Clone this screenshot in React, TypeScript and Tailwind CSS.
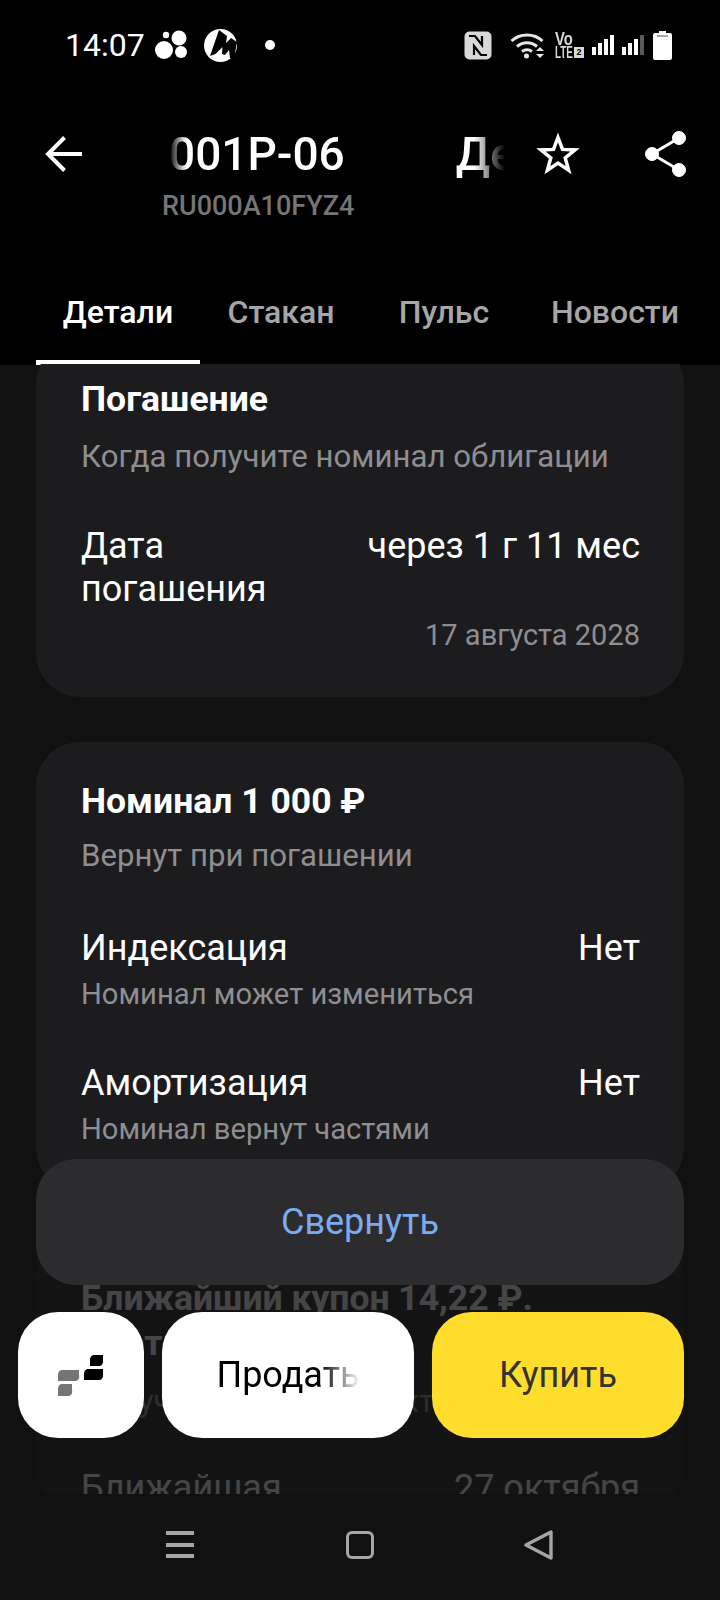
function StatusIcons() {
  return (
    <div className="flex items-center">
      {/* nfc */}
      <svg width="28" height="29" viewBox="0 0 28 29">
        <rect x="0.5" y="0.5" width="27" height="28" rx="5" fill="#d8d8d8" />
        <path d="M5 5h6l7 9v-9M23 24h-6l-7-9v9" fill="none" stroke="#000" strokeWidth="2.2" />
      </svg>
      {/* wifi */}
      <svg width="34" height="28" viewBox="0 0 34 28" className="ml-[18px]" fill="none" stroke="#e6e6e6" strokeWidth="3">
        <path d="M1.5 10C10 2 24 2 32.5 10" />
        <path d="M7 15.5c6-5 14-5 20 0" />
        <path d="M12 20.5c3-2 7-2 10 0" />
        <circle cx="16.5" cy="25" r="2.5" fill="#e6e6e6" stroke="none" />
        <path d="M26 20l4-4 4 4zM26 23h8l-4 4z" fill="#e6e6e6" stroke="none" />
      </svg>
      {/* volte */}
      <div className="ml-[11px] flex h-[28px] w-[29px] flex-col whitespace-nowrap font-['Liberation_Sans'] font-bold leading-none text-[#d8d8d8]">
        <span className="block h-[15px] w-[18px] origin-left scale-x-[0.78] text-[19px] leading-[15px]">Vo</span>
        <div className="flex items-center leading-none">
          <span className="block w-[19px] origin-left scale-x-[0.58] text-[17px] leading-[13px]">LTE</span>
          <span className="flex h-[11px] w-[10px] items-center justify-center bg-[#d8d8d8] text-[9px] text-black">2</span>
        </div>
      </div>
      {/* signal */}
      <svg width="22" height="20" viewBox="0 0 22 20" className="ml-[8px]" fill="#fff">
        <rect x="0" y="12" width="4" height="8" />
        <rect x="6" y="8" width="4" height="12" />
        <rect x="12" y="4" width="4" height="16" />
        <rect x="18" y="0" width="4" height="20" />
      </svg>
      <svg width="22" height="20" viewBox="0 0 22 20" className="ml-[8px]" fill="#fff">
        <rect x="0" y="12" width="4" height="8" />
        <rect x="6" y="8" width="4" height="12" />
        <rect x="12" y="4" width="4" height="16" />
        <rect x="18" y="0" width="4" height="20" fill="#5a5a5a" />
      </svg>
      {/* battery */}
      <svg width="19" height="29" viewBox="0 0 19 29" className="ml-[9px]" fill="#fff">
        <path d="M6 0h7v2h4a2 2 0 0 1 2 2v23a2 2 0 0 1-2 2H2a2 2 0 0 1-2-2V4a2 2 0 0 1 2-2h4z" />
        <rect x="4" y="4.5" width="11" height="1" fill="#555" />
      </svg>
    </div>
  );
}

function Row({ label, value, hint }: { label: string; value: string; hint: string }) {
  return (
    <div>
      <div className="flex justify-between text-[36px] leading-[44px] text-white">
        <span>{label}</span>
        <span>{value}</span>
      </div>
      <div className="mt-[3px] text-[29.2px] leading-[42px] text-[#8e8e93]">{hint}</div>
    </div>
  );
}

export default function App() {
  return (
    <div className="relative flex h-[1600px] w-[720px] flex-col overflow-hidden bg-[#111112] font-['Roboto',sans-serif]">
      <header className="bg-black">
        {/* status bar */}
        <div className="flex h-[90px] items-center justify-between pl-[65px] pr-[48px]">
          <div className="flex items-center text-[32px] text-white">
            <span>14:07</span>
            <svg width="32" height="30" viewBox="0 0 32 30" className="ml-[10px]" fill="#fff">
              <circle cx="24" cy="8" r="7.5" />
              <circle cx="9" cy="20" r="9" />
              <circle cx="26" cy="22" r="6" />
              <circle cx="11" cy="5" r="3.2" />
            </svg>
            <svg width="33" height="33" viewBox="0 0 33 33" className="ml-[17px]">
              <circle cx="16.5" cy="16.5" r="16.5" fill="#fff" />
              <path d="M6 27L15 1l8 6-1 7 5-5 6 4-3 17-4-1-1-8-4 5-3-1 .5-7-7 7z" fill="#000" />
            </svg>
            <span className="ml-[28px] h-[10px] w-[10px] rounded-full bg-white" />
          </div>
          <StatusIcons />
        </div>
        {/* title */}
        <div className="flex h-[132px] items-start pl-[45px] pt-[39px]">
          <svg width="37" height="36" viewBox="0 0 37 36" className="mt-[7px]" fill="none" stroke="#fff" strokeWidth="4">
            <path d="M37 18H3" />
            <path d="M19.5 1.5L3 18l16.5 16.5" />
          </svg>
          <div className="ml-[80px] w-[343px]">
            <div className="flex overflow-hidden whitespace-nowrap pl-[7px] text-[46px] font-medium leading-[50px] text-white [mask-image:linear-gradient(to_right,transparent_2%,black_7%,black_91%,transparent_100%)]">
              <span>001P-06</span>
              <span className="ml-[111px]">Десятый</span>
            </div>
            <div className="mt-[11px] text-[27px] font-medium leading-[32px] text-[#757575]">RU000A10FYZ4</div>
          </div>
          <svg width="44" height="44" viewBox="0 0 44 44" className="mt-[2px] ml-[31px] overflow-visible" fill="none" stroke="#fff" strokeWidth="3.5" strokeMiterlimit="10">
            <path d="M22 6.5l4.5 11.9 12.6.5-9.9 8 3.4 12.2L22 32.1l-10.6 7 3.4-12.2-9.9-8 12.6-.5z" />
          </svg>
          <svg width="42" height="46" viewBox="0 0 42 46" className="mt-[2px] ml-[65px]" fill="#fff" stroke="#fff">
            <circle cx="34" cy="7" r="6.5" />
            <circle cx="7" cy="23" r="6.5" />
            <circle cx="34" cy="39" r="6.5" />
            <path d="M34 7L7 23l27 16" fill="none" strokeWidth="3" />
          </svg>
        </div>
        {/* tabs */}
        <nav className="flex h-[143px] pl-[36px] pt-[68px] text-center text-[32px] font-medium leading-[44px] text-[#a6a6a6]">
          <div className="h-[75px] w-[164px] border-b-[5px] border-white text-white">Детали</div>
          <div className="w-[162px]">Стакан</div>
          <div className="w-[164px]">Пульс</div>
          <div className="w-[178px]">Новости</div>
        </nav>
      </header>

      {/* scrolling content */}
      <main className="-mt-[1px] flex flex-1 flex-col gap-[45px] overflow-hidden px-[36px]">
        <section className="-mt-[24px] h-[357px] shrink-0 rounded-[44px] bg-[#1c1c1e] pl-[45px] pr-[44px] pt-[37px]">
          <h2 className="text-[35.5px] font-bold leading-[44px] text-white">Погашение</h2>
          <p className="mt-[14px] text-[31.2px] leading-[44px] text-[#8e8e93]">Когда получите номинал облигации</p>
          <div className="mt-[46px] flex justify-between text-[36px] leading-[43px] text-white">
            <span className="w-[220px]">Дата погашения</span>
            <span>через 1 г 11 мес</span>
          </div>
          <div className="mt-[4px] text-right text-[29px] leading-[40px] text-[#8e8e93]">17 августа 2028</div>
        </section>

        <section className="h-[450px] shrink-0 rounded-[44px] bg-[#1c1c1e] pl-[45px] pr-[44px] pt-[37px]">
          <h2 className="text-[35.5px] font-bold leading-[44px] text-white">Номинал 1 000 ₽</h2>
          <p className="mt-[11px] text-[31.2px] leading-[44px] text-[#8e8e93]">Вернут при погашении</p>
          <div className="mt-[48px] flex flex-col gap-[46px]">
            <Row label="Индексация" value="Нет" hint="Номинал может измениться" />
            <Row label="Амортизация" value="Нет" hint="Номинал вернут частями" />
          </div>
        </section>

        <section className="shrink-0 rounded-[44px] bg-[#1c1c1e] pl-[45px] pr-[44px] pt-[39px]">
          <h2 className="text-[35.5px] font-bold leading-[45px] text-white">Ближайший купон 14,22 ₽.</h2>
          <h2 className="text-[35.5px] font-bold leading-[45px] text-white">Чистыми 12,37 ₽</h2>
          <p className="mt-[14px] text-[31.2px] leading-[44px] text-[#8e8e93]">Получите на счёт 27 октября</p>
          <div className="mt-[43px] flex justify-between text-[36px] leading-[43px] text-white">
            <span>Ближайшая</span>
            <span>27 октября</span>
          </div>
        </section>
      </main>

      {/* fade behind the actions */}
      <div className="absolute inset-x-0 top-[1160px] h-[334px] bg-[linear-gradient(to_bottom,transparent,rgb(17_17_18/0.78)_37%,rgb(17_17_18/0.78))]" />

      {/* collapse button */}
      <button className="absolute left-[36px] top-[1159px] h-[126px] w-[648px] rounded-[40px] bg-[#2c2c2e] text-[36px] text-[#7cabf0]">
        Свернуть
      </button>

      {/* actions */}
      <div className="absolute left-[18px] top-[1312px] flex gap-[18px]">
        <button className="flex h-[126px] w-[126px] items-center justify-center rounded-[40px] bg-white">
          <svg width="46" height="41" viewBox="0 0 46 41">
            <path d="M3 15h18v5a5 5 0 0 1-3 6H0v-7a5 5 0 0 1 3-4zM3 29h11v6a5 5 0 0 1-3 6H0v-8a5 5 0 0 1 3-4z" fill="#757575" />
            <path d="M29 14h16v6a5 5 0 0 1-3 5H26v-7a5 5 0 0 1 3-4zM35 0h10v6a5 5 0 0 1-3 5H32V4a5 5 0 0 1 3-4z" fill="#000" />
          </svg>
        </button>
        <button className="h-[126px] w-[252px] rounded-[40px] bg-white text-[36px] text-black">
          <span className="[mask-image:linear-gradient(to_right,black_72%,transparent_100%)]">Продать</span>
        </button>
        <button className="h-[126px] w-[252px] rounded-[40px] bg-[#ffdd2d] text-[36px] text-[#333]">Купить</button>
      </div>

      {/* system navigation */}
      <div className="absolute inset-x-0 bottom-0 flex h-[106px] items-start bg-[#111112] pl-[166px] pt-[37px]">
        <div className="flex h-[27px] w-[28px] flex-col justify-between">
          <span className="h-[4px] bg-[#a6a6a6]" />
          <span className="h-[4px] bg-[#a6a6a6]" />
          <span className="h-[4px] bg-[#a6a6a6]" />
        </div>
        <div className="ml-[152px] h-[28px] w-[28px] rounded-[6px] border-[3px] border-[#a6a6a6]" />
        <svg width="30" height="30" viewBox="0 0 30 30" className="-mt-[1px] ml-[150px]" fill="none" stroke="#a6a6a6" strokeWidth="3.4" strokeLinejoin="round">
          <path d="M27 2v26L2 15z" />
        </svg>
      </div>
    </div>
  );
}
